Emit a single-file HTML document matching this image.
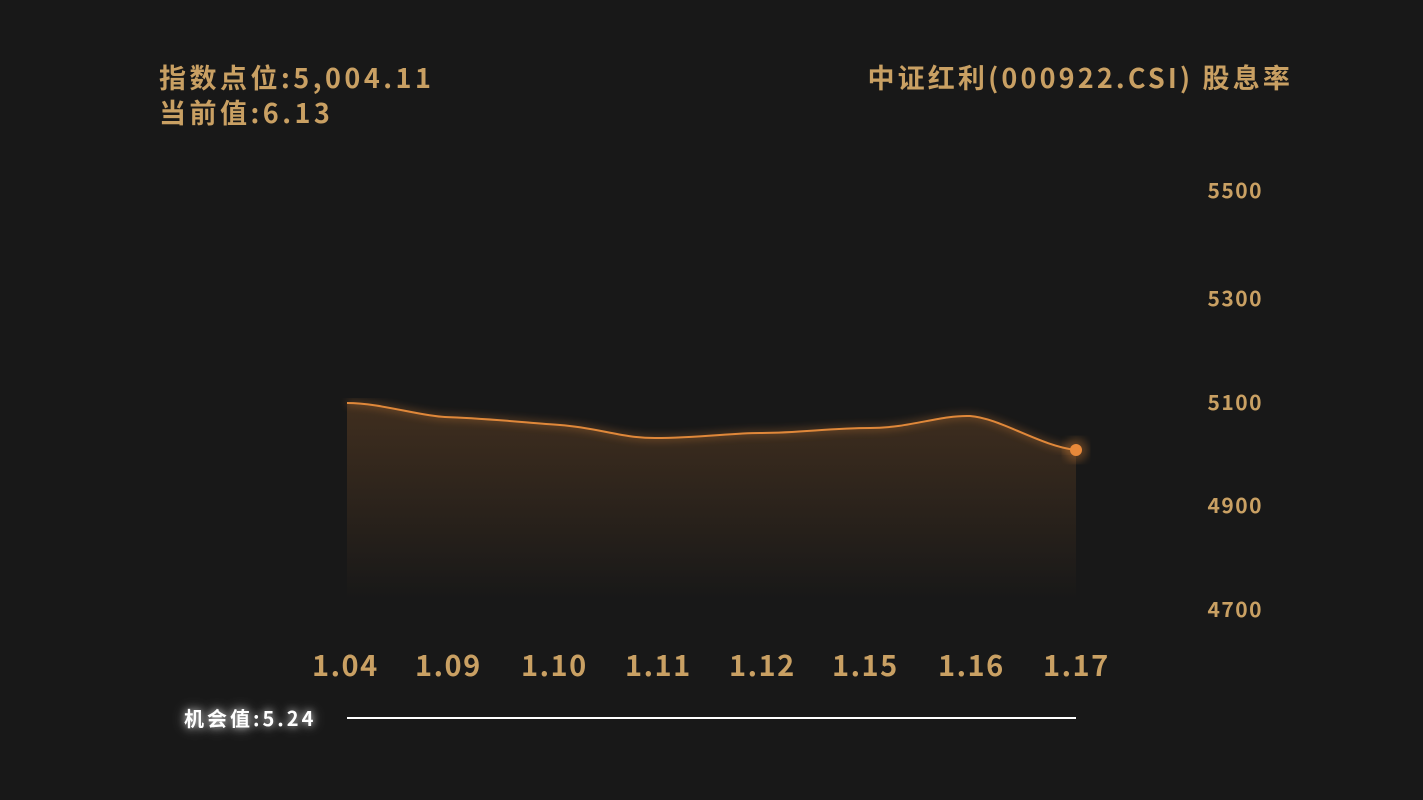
<!DOCTYPE html>
<html><head><meta charset="utf-8"><style>
html,body{margin:0;padding:0;width:1423px;height:800px;background:#181818;overflow:hidden;}
body{position:relative;font-family:"Liberation Sans","Noto Sans CJK SC",sans-serif;font-weight:bold;color:#c9a063;}
.t{position:absolute;white-space:nowrap;font-family:"Noto Sans CJK SC","Liberation Sans",sans-serif;font-weight:bold;}
.h{font-size:27px;letter-spacing:3.5px;line-height:34px;}
.y{font-size:21px;right:160px;letter-spacing:1.5px;}
.x{font-size:29px;top:643px;letter-spacing:1.5px;}
</style></head><body>
<div class="t h" style="left:159px;top:60px;">指数点位:5,004.11</div>
<div class="t h" style="left:159px;top:95px;">当前值:6.13</div>
<div class="t h" style="right:130px;top:60px;letter-spacing:3.15px;">中证红利(000922.CSI) 股息率</div>
<div class="t y" style="top:175px;">5500</div>
<div class="t y" style="top:283px;">5300</div>
<div class="t y" style="top:387px;">5100</div>
<div class="t y" style="top:490px;">4900</div>
<div class="t y" style="top:594px;">4700</div>
<div class="t x" style="left:312px;">1.04</div>
<div class="t x" style="left:415px;">1.09</div>
<div class="t x" style="left:521px;">1.10</div>
<div class="t x" style="left:625px;">1.11</div>
<div class="t x" style="left:729px;">1.12</div>
<div class="t x" style="left:832px;">1.15</div>
<div class="t x" style="left:938px;">1.16</div>
<div class="t x" style="left:1043px;">1.17</div>
<svg width="1423" height="800" style="position:absolute;left:0;top:0">
<defs>
<linearGradient id="g" x1="0" y1="0" x2="0" y2="1">
<stop offset="0" stop-color="#e0883a" stop-opacity="0.2"/>
<stop offset="1" stop-color="#e0883a" stop-opacity="0"/>
</linearGradient>
<filter id="b"><feGaussianBlur stdDeviation="4"/></filter>
</defs>
<path d="M347,403 C380,403 420,416 445,417 C480,418 520,422 560,425 C600,428 620,438 655,438 C700,438 730,433 760,433 C800,433 830,428 870,428 C910,428 940,415 970,416 C1000,418 1040,446 1076,450 L1076,600 L347,600 Z" fill="url(#g)"/>
<path d="M347,403 C380,403 420,416 445,417 C480,418 520,422 560,425 C600,428 620,438 655,438 C700,438 730,433 760,433 C800,433 830,428 870,428 C910,428 940,415 970,416 C1000,418 1040,446 1076,450" fill="none" stroke="#e0883a" stroke-width="5" opacity="0.35" filter="url(#b)"/>
<path d="M347,403 C380,403 420,416 445,417 C480,418 520,422 560,425 C600,428 620,438 655,438 C700,438 730,433 760,433 C800,433 830,428 870,428 C910,428 940,415 970,416 C1000,418 1040,446 1076,450" fill="none" stroke="#e0883a" stroke-width="2"/>
<circle cx="1076" cy="450" r="12" fill="#e0883a" opacity="0.3" filter="url(#b)"/>
<circle cx="1076" cy="450" r="6" fill="#e8893a"/>
<line x1="347" y1="718" x2="1076" y2="718" stroke="#fff" stroke-width="2"/>
</svg>
<div class="t" style="left:184px;top:703px;font-size:20px;color:#fff;letter-spacing:3px;text-shadow:0 0 8px rgba(255,255,255,0.8),0 0 16px rgba(255,255,255,0.4);">机会值:5.24</div>
</body></html>
